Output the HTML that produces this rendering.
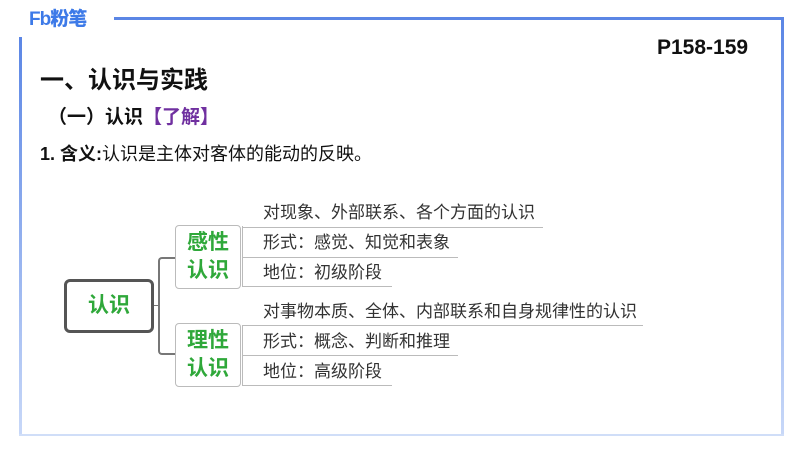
<!DOCTYPE html>
<html><head><meta charset="utf-8"><style>
*{margin:0;padding:0;box-sizing:border-box}
body{width:800px;height:450px;background:#fff;position:relative;overflow:hidden;font-family:"Liberation Sans","Noto Sans CJK SC",sans-serif}
.a{position:absolute}
.t{position:absolute;font-size:17px;color:#333;white-space:nowrap;line-height:20px}
.h{position:absolute;height:1px;background:#bbb}
.box{position:absolute;border:1px solid #bbb;border-radius:4px;background:#fff;color:#2fa83a;font-weight:bold;font-size:21px;line-height:28px;text-align:center;padding-top:3px}
</style></head><body>
<div class="a" style="left:114px;top:17px;width:670px;height:3px;background:#5b86e5"></div>
<div class="a" style="left:781px;top:17px;width:3px;height:419px;background:linear-gradient(#5b86e5,#c8d8f8)"></div>
<div class="a" style="left:19px;top:37px;width:3px;height:399px;background:linear-gradient(#5b86e5,#c8d8f8)"></div>
<div class="a" style="left:19px;top:434px;width:765px;height:2px;background:#d0def8"></div>
<div class="a" style="left:29px;top:8px;font-size:19px;font-weight:900;color:#3d7ae8;letter-spacing:-1px;line-height:24px">Fb粉笔</div>
<div class="a" style="left:657px;top:36px;font-size:21px;font-weight:bold;color:#111">P158-159</div>
<div class="a" style="left:40px;top:66px;font-size:24px;font-weight:bold;color:#111;line-height:30px">一、认识与实践</div>
<div class="a" style="left:48px;top:106px;font-size:19px;font-weight:bold;color:#111;line-height:24px">（一）认识<span style="color:#7030a0">【了解】</span></div>
<div class="a" style="left:40px;top:143px;font-size:18px;color:#111;line-height:22px"><b>1. 含义:</b>认识是主体对客体的能动的反映。</div>

<div class="a" style="left:64px;top:279px;width:90px;height:54px;border:3px solid #555;border-radius:6px;color:#2fa83a;font-weight:bold;font-size:21px;text-align:center;line-height:48px">认识</div>
<div class="a" style="left:154px;top:305px;width:5px;height:1px;background:#777"></div>
<div class="a" style="left:158px;top:257px;width:17px;height:98px;border:2px solid #777;border-right:none;border-radius:4px 0 0 4px"></div>

<div class="box" style="left:175px;top:225px;width:66px;height:64px">感性<br>认识</div>
<div class="box" style="left:175px;top:323px;width:66px;height:64px">理性<br>认识</div>

<div class="a" style="left:242px;top:226px;width:2px;height:61px;border-left:1px solid #bbb"></div>
<div class="a" style="left:242px;top:325px;width:2px;height:61px;border-left:1px solid #bbb"></div>
<div class="h" style="left:242px;top:227px;width:301px"></div>
<div class="h" style="left:242px;top:257px;width:216px"></div>
<div class="h" style="left:242px;top:286px;width:150px"></div>
<div class="h" style="left:242px;top:325px;width:401px"></div>
<div class="h" style="left:242px;top:355px;width:216px"></div>
<div class="h" style="left:242px;top:385px;width:150px"></div>

<div class="t" style="left:263px;top:203px">对现象、外部联系、各个方面的认识</div>
<div class="t" style="left:263px;top:233px">形式：感觉、知觉和表象</div>
<div class="t" style="left:263px;top:263px">地位：初级阶段</div>
<div class="t" style="left:263px;top:302px">对事物本质、全体、内部联系和自身规律性的认识</div>
<div class="t" style="left:263px;top:332px">形式：概念、判断和推理</div>
<div class="t" style="left:263px;top:362px">地位：高级阶段</div>
</body></html>
